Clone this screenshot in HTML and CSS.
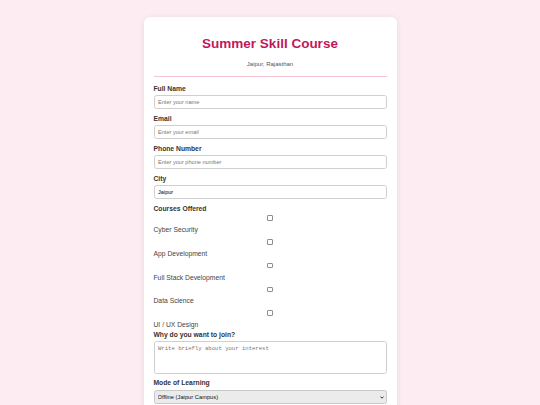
FILE: index.html
```html
<!DOCTYPE html>
<html lang="en">
<head>
<meta charset="utf-8">
<title>Summer Skill Course</title>
<link rel="stylesheet" href="styles.css">
</head>
<body>
<div class="card">
  <h1 class="title">Summer Skill Course</h1>
  <p class="subtitle">Jaipur, Rajasthan</p>
  <hr class="divider">
  <form class="form">
    <div class="field">
      <label class="field-label" for="name">Full Name</label>
      <input class="text-input" id="name" type="text" placeholder="Enter your name">
    </div>
    <div class="field">
      <label class="field-label" for="email">Email</label>
      <input class="text-input" id="email" type="email" placeholder="Enter your email">
    </div>
    <div class="field">
      <label class="field-label" for="phone">Phone Number</label>
      <input class="text-input" id="phone" type="tel" placeholder="Enter your phone number">
    </div>
    <div class="field">
      <label class="field-label" for="city">City</label>
      <input class="text-input value" id="city" type="text" value="Jaipur">
    </div>
    <div class="field">
      <span class="field-label">Courses Offered</span>
      <div class="opt"><input class="check" type="checkbox" id="c1"><label class="opt-label" for="c1">Cyber Security</label></div>
      <div class="opt"><input class="check" type="checkbox" id="c2"><label class="opt-label" for="c2">App Development</label></div>
      <div class="opt"><input class="check" type="checkbox" id="c3"><label class="opt-label" for="c3">Full Stack Development</label></div>
      <div class="opt"><input class="check" type="checkbox" id="c4"><label class="opt-label" for="c4">Data Science</label></div>
      <div class="opt"><input class="check" type="checkbox" id="c5"><label class="opt-label" for="c5">UI / UX Design</label></div>
    </div>
    <div class="field tight">
      <label class="field-label" for="why">Why do you want to join?</label>
      <textarea class="text-area" id="why" placeholder="Write briefly about your interest"></textarea>
    </div>
    <div class="field loose">
      <label class="field-label" for="mode">Mode of Learning</label>
      <div class="select-wrap">
        <select class="select" id="mode">
          <option>Offline (Jaipur Campus)</option>
          <option>Online</option>
        </select>
        <svg class="chevron" width="4" height="3" viewBox="0 0 4 3" aria-hidden="true"><polyline points="0.5,0.6 2,2.2 3.5,0.6" fill="none" stroke="#222" stroke-width="0.9"/></svg>
      </div>
    </div>
  </form>
</div>
</body>
</html>
```

FILE: styles.css
```css
* { box-sizing: border-box; }

html, body {
  margin: 0;
  padding: 0;
  background: #fdecf1;
  font-family: "Liberation Sans", Arial, sans-serif;
  color: #333;
}

.card {
  width: 253px;
  margin: 17px auto 0;
  padding: 19px 10px 20px;
  background: #ffffff;
  border-radius: 6px;
  box-shadow: 0 1px 6px rgba(0, 0, 0, 0.09);
}

.title {
  margin: 0;
  font-size: 13.5px;
  line-height: 16px;
  font-weight: bold;
  text-align: center;
  color: #c2185b;
}

.subtitle {
  margin: 8px 0 0;
  font-size: 6px;
  line-height: 8px;
  text-align: center;
  color: #555;
}

.divider {
  margin: 8px 0 2px;
  border: 0;
  border-top: 1px solid #f6c3d3;
  height: 0;
}

.form {
  display: flex;
  flex-direction: column;
}

.field {
  display: flex;
  flex-direction: column;
  margin-top: 6px;
}

.field.tight { margin-top: 2px; }
.field.loose { margin-top: 5px; }

.field-label {
  display: block;
  font-size: 6.75px;
  line-height: 8px;
  font-weight: bold;
  color: #333;
  margin-bottom: 2px;
}

.text-input {
  display: block;
  width: 100%;
  height: 14px;
  margin: 0;
  padding: 0 3.5px;
  border: 1px solid #cfcfcf;
  border-radius: 2.5px;
  font-family: "Liberation Sans", Arial, sans-serif;
  font-size: 5.6px;
  color: #111;
  background: #fff;
  outline: none;
}

.text-input::placeholder { color: #777; }
.text-input.value { color: #000; font-weight: 500; }

.opt {
  display: flex;
  flex-direction: column;
}

.opt + .opt { margin-top: 4.75px; }

.check {
  -webkit-appearance: none;
  appearance: none;
  display: block;
  width: 5.5px;
  height: 5.5px;
  margin: 0.25px auto 0;
  align-self: center;
  border: 0.8px solid #8f8f8f;
  border-radius: 1px;
  background: #fff;
}

.opt-label {
  display: block;
  margin-top: 5.25px;
  font-size: 6.75px;
  line-height: 8px;
  color: #444;
}

.text-area {
  display: block;
  width: 100%;
  height: 33px;
  margin: 0;
  padding: 3px 3.5px;
  border: 1px solid #cfcfcf;
  border-radius: 2.5px;
  font-family: "Liberation Mono", "Courier New", monospace;
  font-size: 5.6px;
  line-height: 7px;
  resize: none;
  outline: none;
}

.text-area::placeholder { color: #777; }

.select-wrap {
  position: relative;
  margin-top: 1px;
}

.select {
  -webkit-appearance: none;
  appearance: none;
  display: block;
  width: 100%;
  height: 14px;
  margin: 0;
  padding: 0 3px;
  border: 1px solid #c8c8c8;
  border-radius: 2.5px;
  background: #ebebeb;
  font-family: "Liberation Sans", Arial, sans-serif;
  font-size: 5.75px;
  color: #111;
}

.chevron {
  position: absolute;
  right: 3px;
  top: 5.5px;
  pointer-events: none;
}
```
